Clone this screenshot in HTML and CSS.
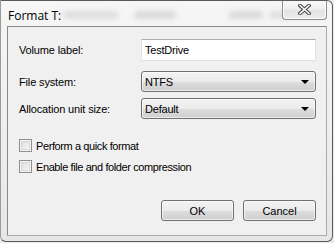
FILE: index.html
```html
<!DOCTYPE html>
<html lang="en">
  <head>
    <meta charset="utf-8" />
    <title>Format T:</title>
    <link rel="stylesheet" href="styles.css">
  </head>
  <body>
    <div class="window">
      <div class="titlebar">
        <span class="title">Format T:</span>
        <div class="glass-blur">
          <span class="blob b1"></span>
          <span class="blob b2"></span>
          <span class="blob b3"></span>
          <span class="blob b4"></span>
        </div>
        <button class="close-btn" title="Close">
          <svg width="13" height="11" viewBox="0 0 13 11">
            <path d="M2 1.5 L11 9.5 M11 1.5 L2 9.5" stroke="#3c3c3c" stroke-width="3.6" stroke-linecap="square"/>
            <path d="M2 1.5 L11 9.5 M11 1.5 L2 9.5" stroke="#ffffff" stroke-width="1.6" stroke-linecap="square"/>
          </svg>
        </button>
      </div>

      <div class="client">
        <div class="form-rows">
          <div class="form-row row-text">
            <label>Volume label:</label>
            <input type="text" class="textbox" value="TestDrive">
          </div>
          <div class="form-row row-combo">
            <label>File system:</label>
            <div class="combo">
              <span>NTFS</span>
              <span class="arrow"></span>
            </div>
          </div>
          <div class="form-row row-combo second">
            <label>Allocation unit size:</label>
            <div class="combo">
              <span>Default</span>
              <span class="arrow"></span>
            </div>
          </div>
        </div>

        <div class="checks">
          <label class="check"><span class="box"></span>Perform a quick format</label>
          <label class="check"><span class="box"></span>Enable file and folder compression</label>
        </div>

        <div class="buttons">
          <button class="btn">OK</button>
          <button class="btn">Cancel</button>
        </div>
      </div>
    </div>
  </body>
</html>
```

FILE: styles.css
```css
body, html {
  margin: 0;
  padding: 0;
  width: 334px;
  height: 243px;
  overflow: hidden;
  background: #e9e9e9;
}

.window {
  width: 333px;
  height: 242px;
  box-sizing: border-box;
  border: 1px solid #5a5a5a;
  border-left-color: #9a9a9a;
  border-radius: 0 6px 6px 6px;
  background: linear-gradient(to bottom, #f6f6f6 0%, #eeeeee 60%, #e6e6e6 100%);
  position: relative;
  overflow: hidden;
}

.titlebar {
  height: 25px;
  display: flex;
  align-items: flex-start;
  position: relative;
}

.title {
  font-family: "Open Sans", "Liberation Sans", sans-serif;
  font-size: 12px;
  color: #000;
  padding: 6px 0 0 7px;
  position: relative;
  z-index: 2;
}

/* blurred glass behind the title */
.glass-blur {
  position: absolute;
  left: 0;
  top: 0;
  right: 0;
  bottom: 0;
  z-index: 1;
}
.blob {
  position: absolute;
  height: 8px;
  border-radius: 4px;
  background: #dadada;
  filter: blur(2.5px);
}
.b1 { left: 62px; top: 10px; width: 55px; background: #dedede; }
.b2 { left: 133px; top: 10px; width: 42px; }
.b3 { left: 228px; top: 10px; width: 34px; }
.b4 { left: 268px; top: 10px; width: 50px; background: #e0e0e0; }

.close-btn {
  position: absolute;
  right: 5px;
  top: -1px;
  width: 45px;
  height: 20px;
  padding: 0;
  border: 1px solid #8c8c8c;
  border-top: none;
  border-radius: 0 0 4px 4px;
  background: linear-gradient(to bottom, #fbfbfb 0%, #ededed 50%, #e2e2e2 51%, #ececec 100%);
  box-shadow: inset 0 0 0 1px rgba(255, 255, 255, 0.8);
  display: flex;
  align-items: center;
  justify-content: center;
  z-index: 2;
}

.client {
  margin-left: 6px;
  width: 320px;
  height: 210px;
  box-sizing: border-box;
  border: 1px solid #8a8a8a;
  border-right-color: #a9a9a9;
  border-bottom-color: #a9a9a9;
  background: #f0f0f0;
  padding: 12px 10px 0 11px;
  font-family: "Liberation Sans", Arial, sans-serif;
  font-size: 11px;
  color: #000;
  display: flex;
  flex-direction: column;
}

.form-row {
  display: flex;
  align-items: center;
}
.form-row label {
  width: 122px;
  letter-spacing: -0.15px;
}
.row-combo {
  margin-top: 10px;
}
.row-combo.second {
  margin-top: 6px;
}

.textbox {
  width: 175px;
  height: 22px;
  box-sizing: border-box;
  margin: 0;
  border: 1px solid #e2e3ea;
  border-top-color: #abadb3;
  background: #fff;
  padding: 0 3px;
  font-family: "Liberation Sans", Arial, sans-serif;
  font-size: 11px;
  letter-spacing: -0.2px;
  color: #000;
  outline: none;
}

.combo {
  width: 175px;
  height: 21px;
  box-sizing: border-box;
  border: 1px solid #707070;
  border-radius: 3px;
  background: linear-gradient(to bottom, #f2f2f2 0%, #ebebeb 50%, #dddddd 51%, #cfcfcf 100%);
  box-shadow: inset 0 0 0 1px rgba(255, 255, 255, 0.6);
  display: flex;
  align-items: center;
  justify-content: space-between;
  padding: 0 6px 0 3px;
  letter-spacing: -0.2px;
}
.arrow {
  width: 0;
  height: 0;
  border-left: 4px solid transparent;
  border-right: 4px solid transparent;
  border-top: 4px solid #000;
  margin-top: 1px;
}

.checks {
  margin-top: 20px;
  display: flex;
  flex-direction: column;
  gap: 8px;
}
.check {
  display: flex;
  align-items: center;
  gap: 4px;
  height: 13px;
  letter-spacing: -0.4px;
}
.box {
  width: 13px;
  height: 13px;
  box-sizing: border-box;
  border: 1px solid #8e8f8f;
  background: linear-gradient(135deg, #d5d5d5 0%, #ececec 55%, #ffffff 100%);
  box-shadow: inset 0 0 0 1px #f4f4f4, inset 0 0 0 2px #d8d8d8;
}

.buttons {
  margin-top: auto;
  margin-bottom: 14px;
  display: flex;
  justify-content: flex-end;
  gap: 9px;
}
.btn {
  width: 73px;
  height: 21px;
  box-sizing: border-box;
  padding: 0;
  border: 1px solid #707070;
  border-radius: 3px;
  background: linear-gradient(to bottom, #f2f2f2 0%, #ebebeb 50%, #dddddd 51%, #cfcfcf 100%);
  box-shadow: inset 0 0 0 1px rgba(255, 255, 255, 0.6);
  font-family: "Liberation Sans", Arial, sans-serif;
  font-size: 11px;
  color: #000;
}
```
